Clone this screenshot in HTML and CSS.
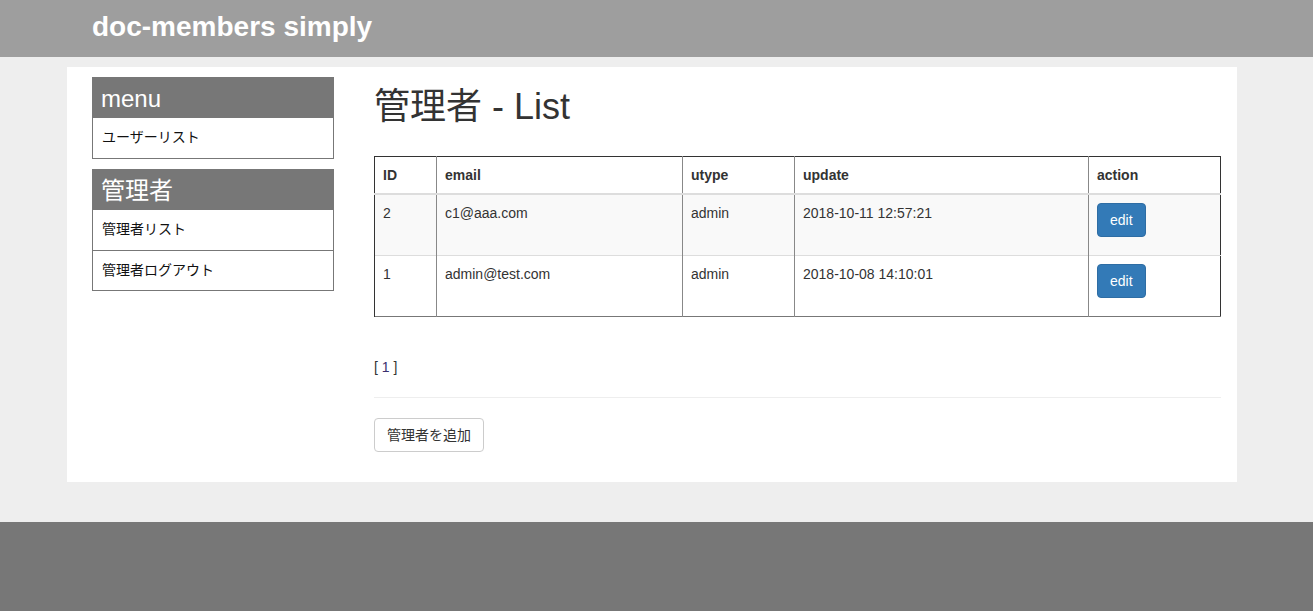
FILE: index.html
```html
<!DOCTYPE html>
<html lang="ja">
<head>
<meta charset="utf-8">
<title>doc-members simply</title>
<link rel="stylesheet" href="styles.css">
</head>
<body>
<header class="site-header">
  <div class="header-inner"><span class="brand">doc-members simply</span></div>
</header>
<div class="page">
  <div class="container">
    <aside class="sidebar">
      <div class="panel">
        <div class="panel-head">menu</div>
        <a class="panel-item" href="#">ユーザーリスト</a>
      </div>
      <div class="panel">
        <div class="panel-head">管理者</div>
        <a class="panel-item" href="#">管理者リスト</a>
        <a class="panel-item" href="#">管理者ログアウト</a>
      </div>
    </aside>
    <main class="main">
      <h1 class="title">管理者 - List</h1>
      <table class="list">
        <thead>
          <tr><th class="c-id">ID</th><th class="c-email">email</th><th class="c-utype">utype</th><th class="c-update">update</th><th class="c-action">action</th></tr>
        </thead>
        <tbody>
          <tr class="odd"><td>2</td><td>c1@aaa.com</td><td>admin</td><td>2018-10-11 12:57:21</td><td><a class="btn btn-primary" href="#">edit</a></td></tr>
          <tr><td>1</td><td>admin@test.com</td><td>admin</td><td>2018-10-08 14:10:01</td><td><a class="btn btn-primary" href="#">edit</a></td></tr>
        </tbody>
      </table>
      <p class="pager">[ <a href="#" class="pager-link">1</a> ]</p>
      <hr class="divider">
      <a class="btn btn-default" href="#">管理者を追加</a>
    </main>
  </div>
</div>
<footer class="site-footer"></footer>
</body>
</html>
```
FILE: styles.css
```css
* { box-sizing: border-box; }
html, body { margin: 0; padding: 0; }
body {
  font-family: "Liberation Sans", Arial, "Noto Sans CJK JP", sans-serif;
  font-size: 14px;
  line-height: 20px;
  color: #333;
  background: #eee;
}
.site-header {
  background: #9e9e9e;
  height: 57px;
}
.header-inner {
  width: 1170px;
  margin-left: 67px;
  padding: 0 25px;
}
.brand {
  display: block;
  color: #fff;
  font-weight: bold;
  font-size: 28px;
  height: 57px;
  line-height: 53px;
}
.page {
  padding: 10px 0 40px;
}
.container {
  width: 1170px;
  margin-left: 67px;
  background: #fff;
  display: grid;
  grid-template-columns: 242px 847px;
  column-gap: 40px;
  padding: 10px 16px 30px 25px;
  align-items: start;
}
.panel {
  border: 1px solid #777;
  margin-bottom: 10px;
}
.panel-head {
  background: #777;
  color: #fff;
  font-size: 24px;
  line-height: 44px;
  padding: 0 9px;
  margin: -1px -1px 0;
  height: 41px;
}
.panel-item {
  display: block;
  height: 40px;
  line-height: 39px;
  padding: 0 9px;
  color: #111;
  text-decoration: none;
  border-top: 1px solid #777;
}
.panel-head + .panel-item { border-top: none; }
.main { min-width: 0; }
.title {
  font-family: "Liberation Sans", Arial, "Noto Sans CJK JP", sans-serif;
  font-weight: normal;
  font-size: 36px;
  line-height: 40px;
  margin: 10px 0 29px;
  color: #333;
}
.list {
  width: 847px;
  border-collapse: collapse;
  border-top: 1px solid #333;
  border-left: 1px solid #333;
  border-right: 1px solid #333;
  border-bottom: 1px solid #777;
  margin-bottom: 40px;
}
.list th, .list td {
  text-align: left;
  vertical-align: top;
  padding: 8px;
  line-height: 20px;
  border-left: 1px solid #888;
}
.list th:first-child, .list td:first-child { border-left: 1px solid #333; }
.list th {
  font-weight: bold;
  border-bottom: 2px solid #ddd;
  height: 37px;
}
.list td {
  border-top: 1px solid #ddd;
  height: 61px;
}
.list tbody tr:first-child td { border-top: none; }
.list .odd td { background: #f9f9f9; }
.c-id { width: 62px; }
.c-email { width: 246px; }
.c-utype { width: 112px; }
.c-update { width: 294px; }
.btn {
  display: inline-block;
  padding: 6px 12px;
  font-size: 14px;
  line-height: 20px;
  border: 1px solid transparent;
  border-radius: 4px;
  text-decoration: none;
  vertical-align: top;
}
.btn-primary {
  background: #337ab7;
  border-color: #2e6da4;
  color: #fff;
}
.btn-default {
  background: #fff;
  border-color: #ccc;
  color: #333;
}
.pager {
  margin: 0;
  line-height: 20px;
}
.pager-link { color: #3b2f6e; text-decoration: none; }
.divider {
  border: 0;
  border-top: 1px solid #eee;
  margin: 20px 0;
}
.site-footer {
  background: #777;
  height: 89px;
}
```
